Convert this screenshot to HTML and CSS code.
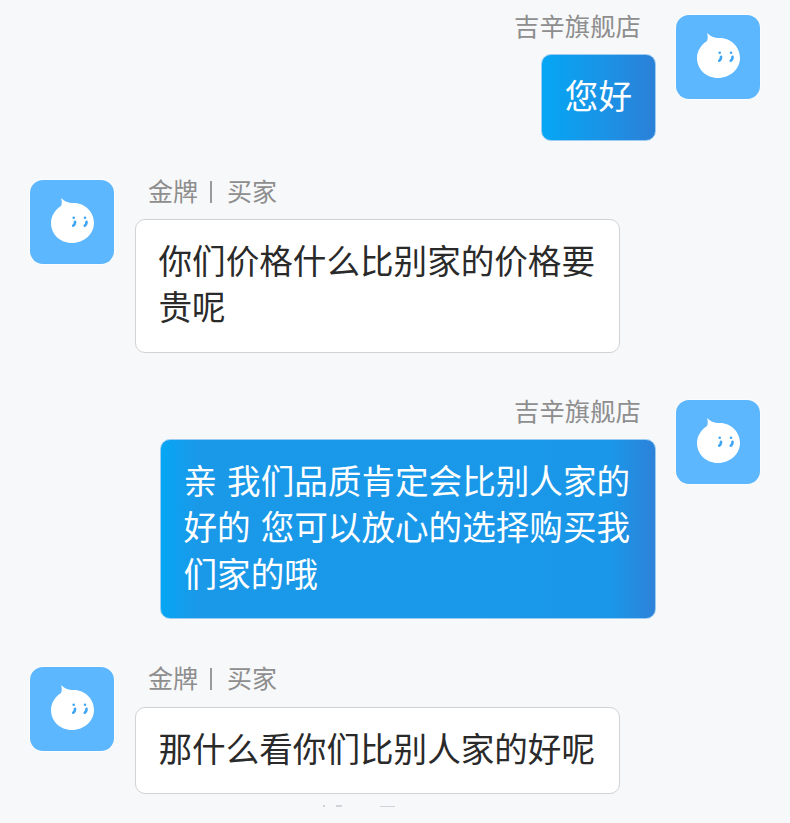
FILE: index.html
```html
<!DOCTYPE html>
<html>
<head>
  <meta charset="utf-8">
  <meta name="viewport" content="width=device-width, initial-scale=1.0">
  <title>Chat</title>
  <link rel="stylesheet" href="styles.css">
</head>
<body>
<main class="chat">
  <section class="msg msg-out msg-first">
    <div class="msg-body">
      <div class="name">吉辛旗舰店</div>
      <div class="bubble bubble-blue">您好</div>
    </div>
    <svg class="avatar" viewBox="0 0 84 84"><path class="drop" d="M31 18C34 21 38 23 44 23C55 23 64 32 64 43C64 54 54 63 42 63C30 63 21 54 21 43C21 36 25 30 31 26C32 24 32 21 31 18Z"/><path class="eye" d="M43.7 37.7v.1M45 41.7Q45.2 44.5 43.3 45.7M55 37.7v.1M56.5 41.7Q56.7 44.5 54.8 45.7"/></svg>
  </section>

  <section class="msg msg-in">
    <svg class="avatar" viewBox="0 0 84 84"><path class="drop" d="M31 18C34 21 38 23 44 23C55 23 64 32 64 43C64 54 54 63 42 63C30 63 21 54 21 43C21 36 25 30 31 26C32 24 32 21 31 18Z"/><path class="eye" d="M43.7 37.7v.1M45 41.7Q45.2 44.5 43.3 45.7M55 37.7v.1M56.5 41.7Q56.7 44.5 54.8 45.7"/></svg>
    <div class="msg-body">
      <div class="name">金牌<span class="sep"></span>买家</div>
      <div class="bubble bubble-white">你们价格什么比别家的价格要<br>贵呢</div>
    </div>
  </section>

  <section class="msg msg-out">
    <div class="msg-body">
      <div class="name">吉辛旗舰店</div>
      <div class="bubble bubble-blue bubble-wide">亲<span class="gap"></span>我们品质肯定会比别人家的<br>好的<span class="gap"></span>您可以放心的选择购买我<br>们家的哦</div>
    </div>
    <svg class="avatar" viewBox="0 0 84 84"><path class="drop" d="M31 18C34 21 38 23 44 23C55 23 64 32 64 43C64 54 54 63 42 63C30 63 21 54 21 43C21 36 25 30 31 26C32 24 32 21 31 18Z"/><path class="eye" d="M43.7 37.7v.1M45 41.7Q45.2 44.5 43.3 45.7M55 37.7v.1M56.5 41.7Q56.7 44.5 54.8 45.7"/></svg>
  </section>

  <section class="msg msg-in msg-last">
    <svg class="avatar" viewBox="0 0 84 84"><path class="drop" d="M31 18C34 21 38 23 44 23C55 23 64 32 64 43C64 54 54 63 42 63C30 63 21 54 21 43C21 36 25 30 31 26C32 24 32 21 31 18Z"/><path class="eye" d="M43.7 37.7v.1M45 41.7Q45.2 44.5 43.3 45.7M55 37.7v.1M56.5 41.7Q56.7 44.5 54.8 45.7"/></svg>
    <div class="msg-body">
      <div class="name">金牌<span class="sep"></span>买家</div>
      <div class="bubble bubble-white">那什么看你们比别人家的好呢</div>
      <div class="cut-off"><i class="fleck"></i><i class="fleck fleck-wide"></i><i class="fleck fleck-line"></i></div>
    </div>
  </section>
</main>
</body>
</html>
```

FILE: styles.css
```css
html, body { margin: 0; padding: 0; }
body { width: 790px; height: 823px; overflow: hidden; background: #f7f8fa; font-family: "Noto Sans CJK SC", "Noto Sans", sans-serif; }
.chat { display: flex; flex-direction: column; gap: 48px; padding: 15px 30px 0; }
.msg { display: flex; align-items: flex-start; gap: 20px; }
.msg-first { margin-bottom: -9px; }
.msg-first + .msg { margin-bottom: -0.5px; }
.msg-out { justify-content: flex-end; }
.msg-in { gap: 21px; }
.msg-body { display: flex; flex-direction: column; }
.msg-out .msg-body { align-items: flex-end; }
.avatar { flex: none; width: 84px; height: 84px; background: #5db7ff; border-radius: 13px; box-shadow: 0 0 0 1px rgba(255, 255, 255, 0.6); }
.drop { fill: #fff; }
.eye { fill: none; stroke: #3ea6f5; stroke-width: 2.6; stroke-linecap: round; }
.name { height: 39px; font-size: 25px; line-height: 20px; color: #8e8e8e; }
.msg-out .name { padding-right: 15px; font-size: 25.4px; }
.msg-in .name { display: flex; padding-left: 13px; }
.msg-last .name { height: 40px; }
.sep { width: 2px; height: 22px; margin: 1px 15px 0 12px; background: #9a9a9a; }
.bubble { box-sizing: border-box; padding: 16.75px 23px 21.75px 22.5px; border-radius: 10px; font-size: 33.6px; line-height: 46.5px; white-space: nowrap; }
.bubble-white { width: 485px; background: #fff; border: 1px solid #d2d2d2; color: #2a2a2a; }
.bubble-blue { background: linear-gradient(90deg, #05a6f4 0%, #1b93e6 55%, #2b80d7 100%); border: 1px solid #9ccdf0; color: #fff; }
.bubble-wide { width: 496px; background: linear-gradient(90deg, #05a6f4 0%, #1a99e9 7%, #1a97e8 91%, #2d82d9 100%); }
.gap { display: inline-block; width: 10px; }
.cut-off { display: flex; align-items: center; height: 4px; margin-top: 10px; padding-left: 188px; }
.fleck { width: 2px; height: 2px; background: #d2d3d6; }
.fleck-wide { width: 6px; margin-left: 11px; }
.fleck-line { width: 15px; height: 1px; margin-left: 38px; }
```
